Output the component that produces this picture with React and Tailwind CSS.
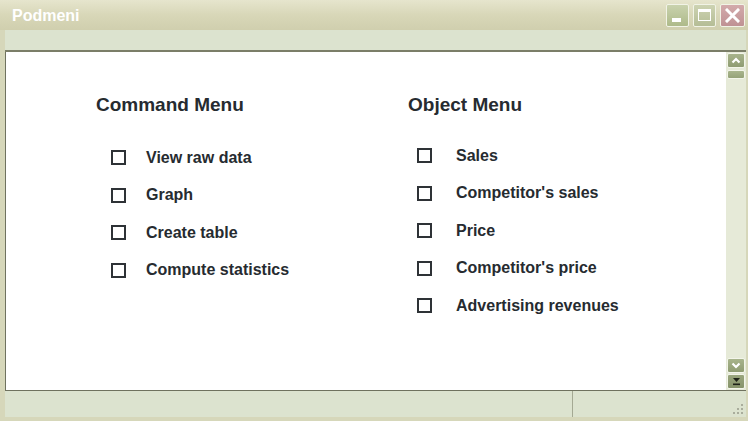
import React from "react";

const leftItems = ["View raw data", "Graph", "Create table", "Compute statistics"];
const rightItems = ["Sales", "Competitor's sales", "Price", "Competitor's price", "Advertising revenues"];

function Box() {
  return <span className="block w-[15px] h-[15px] border-2 border-[#2e3236] bg-white shrink-0" />;
}

export default function App() {
  return (
    <div className="w-[748px] h-[421px] flex flex-col bg-[#d6d7ba] font-['Liberation_Sans',Arial,sans-serif] overflow-hidden">
      {/* title bar */}
      <div className="h-[30px] shrink-0 flex items-center justify-between pl-[12px] pr-[3px] bg-gradient-to-b from-[#e6e5cd] via-[#d8d7b8] to-[#d0cfae]">
        <span className="text-white font-bold text-[16px] leading-none pt-[1px]">Podmeni</span>
        <div className="flex items-center gap-[4px]">
          <div className="w-[23px] h-[23px] rounded-[2px] border border-[#f1f3e6] bg-gradient-to-b from-[#c9d2ad] to-[#aeba8a] flex items-end justify-start pl-[5px] pb-[4px]">
            <span className="block w-[9px] h-[4px] bg-white" />
          </div>
          <div className="w-[23px] h-[23px] rounded-[2px] border border-[#f1f3e6] bg-gradient-to-b from-[#cdd3b2] to-[#b5bd96] flex items-center justify-center">
            <span className="block w-[13px] h-[12px] border border-white border-t-[3px]" />
          </div>
          <div className="w-[25px] h-[23px] rounded-[2px] border border-[#f1f3e6] bg-gradient-to-b from-[#d3aaab] to-[#bf9294] flex items-center justify-center">
            <svg width="15" height="15" viewBox="0 0 15 15">
              <path d="M2 2 L13 13 M13 2 L2 13" stroke="white" strokeWidth="3" strokeLinecap="square" />
            </svg>
          </div>
        </div>
      </div>

      {/* frame */}
      <div className="flex-1 flex flex-col pl-[5px] pr-[2px] pb-[4px]">
        <div className="flex-1 flex flex-col bg-[#dce3cf]">
          <div className="h-[20px] shrink-0" />
          <div className="h-[341px] shrink-0 flex border-t-2 border-[#7b7e68]">
            {/* content */}
            <div className="flex-1 bg-white border-l border-b border-[#6f725f] flex pt-[42px] pl-[90px]">
              <div className="w-[312px] flex flex-col">
                <h2 className="text-[19px] font-bold text-[#262b30] leading-[22px]">Command Menu</h2>
                <div className="mt-[23px] flex flex-col">
                  {leftItems.map((t) => (
                    <div key={t} className="h-[37.5px] flex items-center pl-[15px]">
                      <Box />
                      <span className="ml-[20px] text-[16px] font-bold text-[#262b30] leading-none">{t}</span>
                    </div>
                  ))}
                </div>
              </div>
              <div className="flex flex-col">
                <h2 className="text-[19px] font-bold text-[#262b30] leading-[22px]">Object Menu</h2>
                <div className="mt-[21px] flex flex-col">
                  {rightItems.map((t) => (
                    <div key={t} className="h-[37.5px] flex items-center pl-[9px]">
                      <Box />
                      <span className="ml-[24px] text-[16px] font-bold text-[#262b30] leading-none">{t}</span>
                    </div>
                  ))}
                </div>
              </div>
            </div>
            {/* scrollbar */}
            <div className="w-[20px] shrink-0 bg-[#e6ead8] border-b border-[#6f725f] flex flex-col items-center pt-[1px] pb-[1px]">
              <div className="w-[18px] h-[15px] rounded-[2px] border border-[#f3f5ea] bg-gradient-to-b from-[#a8b48c] to-[#8f9c72] flex items-center justify-center">
                <svg width="10" height="7" viewBox="0 0 10 7">
                  <path d="M1.5 5.5 L5 2 L8.5 5.5" fill="none" stroke="white" strokeWidth="2.2" />
                </svg>
              </div>
              <div className="mt-[2px] w-[18px] h-[9px] rounded-[2px] border border-[#f3f5ea] bg-gradient-to-b from-[#a9b58d] to-[#95a278]" />
              <div className="flex-1" />
              <div className="w-[18px] h-[15px] rounded-[2px] border border-[#f3f5ea] bg-gradient-to-b from-[#a8b48c] to-[#8f9c72] flex items-center justify-center">
                <svg width="10" height="7" viewBox="0 0 10 7">
                  <path d="M1.5 1.5 L5 5 L8.5 1.5" fill="none" stroke="white" strokeWidth="2.2" />
                </svg>
              </div>
              <div className="mt-[1px] w-[18px] h-[15px] rounded-[2px] border border-[#f3f5ea] bg-gradient-to-b from-[#9aa67e] to-[#86936a] flex items-center justify-center">
                <svg width="9" height="9" viewBox="0 0 9 9">
                  <path d="M1 1 H8 L4.5 5 Z" fill="#1e2218" />
                  <rect x="1" y="6.5" width="7" height="1.6" fill="#1e2218" />
                </svg>
              </div>
            </div>
          </div>
          {/* status bar */}
          <div className="flex-1 flex">
            <div className="w-[568px] border-r border-[#a4a993]" />
            <div className="flex-1" />
            <div className="w-[20px] flex items-end justify-end pb-[2px] pr-[2px]">
              <svg width="12" height="12" viewBox="0 0 12 12">
                <g fill="#a9ad9c">
                  <rect x="9" y="1" width="2" height="2" />
                  <rect x="5" y="5" width="2" height="2" />
                  <rect x="9" y="5" width="2" height="2" />
                  <rect x="1" y="9" width="2" height="2" />
                  <rect x="5" y="9" width="2" height="2" />
                  <rect x="9" y="9" width="2" height="2" />
                </g>
              </svg>
            </div>
          </div>
        </div>
      </div>
    </div>
  );
}
